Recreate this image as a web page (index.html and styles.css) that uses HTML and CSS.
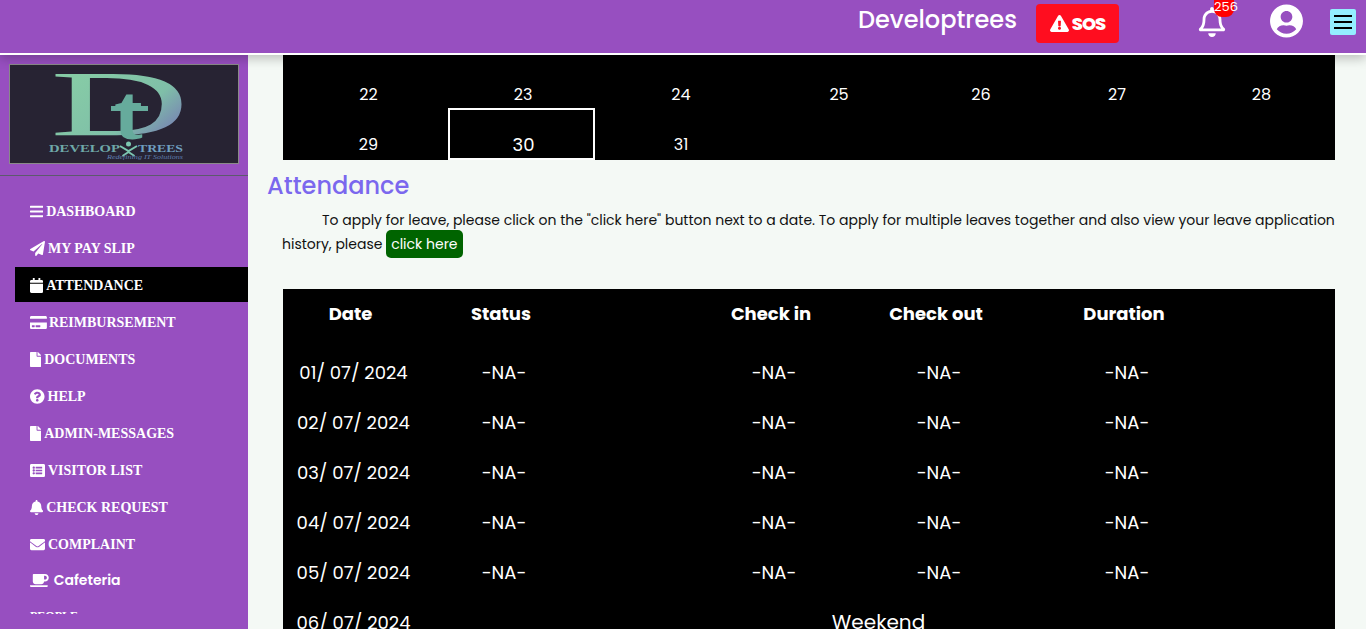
FILE: index.html
```html
<!DOCTYPE html>
<html lang="en">
<head>
<meta charset="utf-8">
<title>Attendance - Developtrees</title>
<link rel="stylesheet" href="styles.css">
</head>
<body>
<div class="page">
  <header class="topbar">
    <div class="brand">Developtrees</div>
    <button class="sos">
      <svg class="sos-icon" viewBox="0 0 576 512"><path d="M569.517 440.013C587.975 472.007 564.806 512 527.940 512H48.054c-36.937 0-59.999-40.055-41.577-71.987L246.423 23.985c18.467-32.009 64.720-31.951 83.154 0l239.940 416.028zM288 354c-25.405 0-46 20.595-46 46s20.595 46 46 46 46-20.595 46-46-20.595-46-46-46zm-43.673-165.346l7.418 136c.347 6.364 5.609 11.346 11.982 11.346h48.546c6.373 0 11.635-4.982 11.982-11.346l7.418-136c.375-6.874-5.098-12.654-11.982-12.654h-63.383c-6.884 0-12.356 5.780-11.981 12.654z"/></svg>
      <span>SOS</span>
    </button>
    <div class="bell">
      <svg class="bell-icon" viewBox="0 0 448 512"><path d="M439.390 362.290c-19.320-20.760-55.470-51.990-55.470-154.290 0-77.700-54.480-139.900-127.940-155.160V32c0-17.670-14.320-32-31.980-32s-31.980 14.330-31.980 32v20.840C118.560 68.100 64.080 130.300 64.080 208c0 102.300-36.150 133.530-55.470 154.290-6 6.450-8.660 14.160-8.610 21.710.110 16.400 12.980 32 32.100 32h383.800c19.120 0 32-15.600 32.100-32 .050-7.550-2.610-15.270-8.610-21.710zM67.530 368c21.220-27.970 44.420-74.330 44.530-159.420 0-.2-.06-.380-.06-.580 0-61.860 50.140-112 112-112s112 50.140 112 112c0 .2-.06.380-.06.580.11 85.100 23.310 131.460 44.530 159.420H67.530zM224 512c35.320 0 63.970-28.650 63.970-64H160.030c0 35.350 28.650 64 63.970 64z"/></svg>
      <span class="badge">256</span>
    </div>
    <svg class="user-icon" viewBox="0 0 496 512"><path d="M248 8C111 8 0 119 0 256s111 248 248 248 248-111 248-248S385 8 248 8zm0 96c48.600 0 88 39.400 88 88s-39.400 88-88 88-88-39.400-88-88 39.400-88 88-88zm0 344c-58.700 0-111.300-26.600-146.500-68.200 18.800-35.400 55.600-59.800 98.500-59.800 2.400 0 4.800.4 7.100 1.100 13 4.200 26.600 6.900 40.900 6.900 14.300 0 28-2.700 40.900-6.900 2.300-.7 4.700-1.100 7.100-1.100 42.900 0 79.700 24.400 98.500 59.800C359.300 421.400 306.700 448 248 448z"/></svg>
    <button class="burger"><i></i><i></i><i></i></button>
  </header>

  <aside class="sidebar">
    <div class="logo">
      <svg class="logo-art" viewBox="0 0 228 98" preserveAspectRatio="none">
        <defs>
          <linearGradient id="dt" x1="0.25" y1="0.2" x2="1" y2="0.85">
            <stop offset="0" stop-color="#86cba6"/>
            <stop offset="0.55" stop-color="#7fbfa8"/>
            <stop offset="1" stop-color="#7468b8"/>
          </linearGradient>
        </defs>
        <rect width="228" height="98" fill="#272333"/>
        <text class="logo-d" transform="translate(40 70) scale(2.05 1)" fill="url(#dt)">D</text>
        <text class="logo-t" transform="translate(104 74) scale(1.1 1)" fill="#66ab9c">t</text>
        <rect class="logo-bar" x="101" y="41" width="37" height="5"/>
        <text class="logo-name" x="39" y="87" textLength="71" lengthAdjust="spacingAndGlyphs" fill="#6fa8a8">DEVELOP</text>
        <circle cx="118.500" cy="79" r="2.500" fill="#7cc7b0"/>
        <path class="logo-figure" d="M110 81l8.500 5 8.500-5M118.500 86v1M118.500 87l-6 4M118.500 87l6 4"/>
        <text class="logo-name" x="128" y="87" textLength="45" lengthAdjust="spacingAndGlyphs" fill="#6f9fc0">TREES</text>
        <text class="logo-tag" x="97" y="94" textLength="76" lengthAdjust="spacingAndGlyphs" fill="#5f7fb0">Redefining IT Solutions</text>
      </svg>
    </div>
    <hr class="side-rule">
    <nav class="nav">
      <a class="nav-item"><svg viewBox="0 0 448 512"><path d="M16 132h416c8.837 0 16-7.163 16-16V76c0-8.837-7.163-16-16-16H16C7.163 60 0 67.163 0 76v40c0 8.837 7.163 16 16 16zm0 160h416c8.837 0 16-7.163 16-16v-40c0-8.837-7.163-16-16-16H16c-8.837 0-16 7.163-16 16v40c0 8.837 7.163 16 16 16zm0 160h416c8.837 0 16-7.163 16-16v-40c0-8.837-7.163-16-16-16H16c-8.837 0-16 7.163-16 16v40c0 8.837 7.163 16 16 16z"/></svg>DASHBOARD</a>
      <a class="nav-item"><svg viewBox="0 0 512 512"><path d="M476 3.2L12.5 270.600c-18.100 10.400-15.800 35.600 2.200 43.200L121 358.400l287.300-253.200c5.500-4.900 13.300 2.600 8.600 8.300L176 407v80.500c0 23.600 28.500 32.900 42.500 15.800L282 426l124.600 52.200c14.200 6 30.400-2.900 33-18.200l72-432C515 7.800 493.300-6.800 476 3.200z"/></svg>MY PAY SLIP</a>
      <a class="nav-item active"><svg viewBox="0 0 448 512"><path d="M12 192h424c6.600 0 12 5.400 12 12v260c0 26.500-21.500 48-48 48H48c-26.500 0-48-21.500-48-48V204c0-6.600 5.400-12 12-12zm436-44v-36c0-26.500-21.500-48-48-48h-48V12c0-6.600-5.400-12-12-12h-40c-6.600 0-12 5.400-12 12v52H160V12c0-6.600-5.400-12-12-12h-40c-6.600 0-12 5.400-12 12v52H48C21.500 64 0 85.500 0 112v36c0 6.600 5.400 12 12 12h424c6.600 0 12-5.400 12-12z"/></svg>ATTENDANCE</a>
      <a class="nav-item nav-tight"><svg viewBox="0 0 576 512"><path d="M0 432c0 26.500 21.500 48 48 48h480c26.500 0 48-21.500 48-48V256H0v176zm192-68c0-6.600 5.400-12 12-12h136c6.600 0 12 5.400 12 12v40c0 6.600-5.400 12-12 12H204c-6.600 0-12-5.400-12-12v-40zm-128 0c0-6.600 5.400-12 12-12h72c6.600 0 12 5.400 12 12v40c0 6.600-5.400 12-12 12H76c-6.600 0-12-5.400-12-12v-40zM576 80v48H0V80c0-26.500 21.500-48 48-48h480c26.500 0 48 21.500 48 48z"/></svg>REIMBURSEMENT</a>
      <a class="nav-item"><svg viewBox="0 0 384 512"><path d="M224 136V0H24C10.700 0 0 10.700 0 24v464c0 13.300 10.700 24 24 24h336c13.300 0 24-10.700 24-24V160H248c-13.200 0-24-10.800-24-24zm160-14.100V128H256V0h6.100c6.400 0 12.500 2.500 17 7l97.900 98c4.500 4.500 7 10.600 7 16.900z"/></svg>DOCUMENTS</a>
      <a class="nav-item"><svg viewBox="8 0 496 512"><path d="M504 256c0 136.997-111.043 248-248 248S8 392.997 8 256C8 119.083 119.043 8 256 8s248 111.083 248 248zM262.655 90c-54.497 0-89.255 22.957-116.549 63.758-3.536 5.286-2.353 12.415 2.715 16.258l34.699 26.310c5.205 3.947 12.621 3.008 16.665-2.122 17.864-22.658 30.113-35.797 57.303-35.797 20.429 0 45.698 13.148 45.698 32.958 0 14.976-12.363 22.667-32.534 33.976C247.128 238.528 216 254.941 216 296v4c0 6.627 5.373 12 12 12h56c6.627 0 12-5.373 12-12v-1.333c0-28.462 83.186-29.647 83.186-106.667 0-58.002-60.165-102-116.531-102zM256 338c-25.365 0-46 20.635-46 46 0 25.364 20.635 46 46 46s46-20.636 46-46c0-25.365-20.635-46-46-46z"/></svg>HELP</a>
      <a class="nav-item"><svg viewBox="0 0 384 512"><path d="M224 136V0H24C10.700 0 0 10.700 0 24v464c0 13.300 10.700 24 24 24h336c13.300 0 24-10.700 24-24V160H248c-13.200 0-24-10.800-24-24zm160-14.100V128H256V0h6.100c6.400 0 12.500 2.500 17 7l97.900 98c4.500 4.500 7 10.600 7 16.900z"/></svg>ADMIN-MESSAGES</a>
      <a class="nav-item"><svg viewBox="0 0 512 512"><path d="M464 480H48c-26.510 0-48-21.490-48-48V80c0-26.510 21.490-48 48-48h416c26.510 0 48 21.490 48 48v352c0 26.510-21.490 48-48 48zM128 120c-22.091 0-40 17.909-40 40s17.909 40 40 40 40-17.909 40-40-17.909-40-40-40zm0 96c-22.091 0-40 17.909-40 40s17.909 40 40 40 40-17.909 40-40-17.909-40-40-40zm0 96c-22.091 0-40 17.909-40 40s17.909 40 40 40 40-17.909 40-40-17.909-40-40-40zm288-136v-32c0-6.627-5.373-12-12-12H204c-6.627 0-12 5.373-12 12v32c0 6.627 5.373 12 12 12h200c6.627 0 12-5.373 12-12zm0 96v-32c0-6.627-5.373-12-12-12H204c-6.627 0-12 5.373-12 12v32c0 6.627 5.373 12 12 12h200c6.627 0 12-5.373 12-12zm0 96v-32c0-6.627-5.373-12-12-12H204c-6.627 0-12 5.373-12 12v32c0 6.627 5.373 12 12 12h200c6.627 0 12-5.373 12-12z"/></svg>VISITOR LIST</a>
      <a class="nav-item"><svg viewBox="0 0 448 512"><path d="M224 512c35.320 0 63.970-28.650 63.970-64H160.030c0 35.350 28.650 64 63.970 64zm215.390-149.710c-19.320-20.760-55.470-51.990-55.470-154.290 0-77.700-54.480-139.900-127.940-155.160V32c0-17.670-14.320-32-31.980-32s-31.980 14.330-31.980 32v20.840C118.560 68.100 64.080 130.300 64.080 208c0 102.300-36.150 133.530-55.470 154.290-6 6.450-8.660 14.160-8.610 21.710.110 16.400 12.980 32 32.100 32h383.800c19.120 0 32-15.600 32.100-32 .050-7.550-2.610-15.270-8.610-21.710z"/></svg>CHECK REQUEST</a>
      <a class="nav-item"><svg viewBox="0 0 512 512"><path d="M502.300 190.800c3.900-3.100 9.700-.2 9.700 4.700V400c0 26.500-21.500 48-48 48H48c-26.500 0-48-21.500-48-48V195.600c0-5 5.700-7.800 9.700-4.700 22.400 17.400 52.100 39.500 154.100 113.600 21.100 15.400 56.700 47.800 92.200 47.600 35.700.3 72-32.800 92.300-47.600 102-74.100 131.600-96.300 154-113.700zM256 320c23.200.4 56.600-29.200 73.400-41.400 132.700-96.300 142.800-104.700 173.400-128.700 5.800-4.500 9.200-11.500 9.200-18.900v-19c0-26.500-21.500-48-48-48H48C21.500 64 0 85.500 0 112v19c0 7.400 3.400 14.300 9.200 18.900 30.600 23.900 40.700 32.400 173.400 128.700 16.800 12.200 50.200 41.800 73.400 41.400z"/></svg>COMPLAINT</a>
      <a class="nav-item nav-sans"><svg viewBox="0 0 640 512"><path d="M192 384h192c53 0 96-43 96-96h32c70.600 0 128-57.400 128-128S582.600 32 512 32H120c-13.300 0-24 10.700-24 24v232c0 53 43 96 96 96zM512 96c35.300 0 64 28.700 64 64s-28.700 64-64 64h-32V96h32zm47.700 384H48.300c-47.600 0-61-64-36-64h583.300c25 0 11.800 64-35.900 64z"/></svg>Cafeteria</a>
      <a class="nav-item nav-people">PEOPLE</a>
    </nav>
  </aside>

  <main class="content">
    <div class="calendar">
      <span class="c1">22</span><span class="c2">23</span><span class="c3">24</span><span class="c4">25</span><span class="c5">26</span><span class="c6">27</span><span class="c7">28</span>
      <span class="c1">29</span><span class="c2 today">30</span><span class="c3">31</span>
    </div>
    <h1 class="title">Attendance</h1>
    <p class="intro">To apply for leave, please click on the "click here" button next to a date. To apply for multiple leaves together and also view your leave application history, please <a class="leave-link">click here</a></p>
    <table class="records">
      <colgroup><col class="col-date"><col class="col-status"><col class="col-gap"><col class="col-in"><col class="col-out"><col class="col-dur"><col class="col-end"></colgroup>
      <thead>
        <tr><th>Date</th><th>Status</th><th></th><th>Check in</th><th>Check out</th><th>Duration</th><th></th></tr>
      </thead>
      <tbody>
        <tr><td>01/ 07/ 2024</td><td>-NA-</td><td></td><td>-NA-</td><td>-NA-</td><td>-NA-</td><td></td></tr>
        <tr><td>02/ 07/ 2024</td><td>-NA-</td><td></td><td>-NA-</td><td>-NA-</td><td>-NA-</td><td></td></tr>
        <tr><td>03/ 07/ 2024</td><td>-NA-</td><td></td><td>-NA-</td><td>-NA-</td><td>-NA-</td><td></td></tr>
        <tr><td>04/ 07/ 2024</td><td>-NA-</td><td></td><td>-NA-</td><td>-NA-</td><td>-NA-</td><td></td></tr>
        <tr><td>05/ 07/ 2024</td><td>-NA-</td><td></td><td>-NA-</td><td>-NA-</td><td>-NA-</td><td></td></tr>
        <tr><td>06/ 07/ 2024</td><td class="weekend" colspan="6">Weekend</td></tr>
      </tbody>
    </table>
  </main>
</div>
</body>
</html>
```

FILE: styles.css
```css
* { box-sizing: border-box; }
html, body { margin: 0; height: 100%; overflow: hidden; }
body { font-family: Poppins, Inter, "Noto Sans", sans-serif; color: #111; }

.page {
  display: grid;
  grid-template-columns: 248px 1fr;
  grid-template-rows: 55px 1fr;
  height: 100vh;
  background: #f4f9f5;
}

/* top bar */
.topbar {
  grid-column: 1 / -1;
  position: relative;
  z-index: 2;
  display: flex;
  align-items: flex-start;
  justify-content: flex-end;
  background: #974fc0;
  border-bottom: 2px solid #fff;
  box-shadow: 0 4px 10px rgba(0, 0, 0, .22);
  color: #fff;
  padding-right: 10px;
}
.brand { font-size: 24px; font-weight: 500; line-height: 40px; margin-right: 19px; }
.sos {
  display: flex; align-items: center; justify-content: center; gap: 3px;
  width: 83px; height: 39px; margin-top: 4px; margin-right: 79px;
  background: #ff0d1f; color: #fff; border: 0; border-radius: 4px;
  font: 800 18px/1 Poppins, Inter, sans-serif;
  letter-spacing: -1px;
}
.sos-icon { width: 19px; height: 17px; fill: #fff; }
.bell { position: relative; margin-top: 7px; margin-right: 44px; width: 28px; height: 30px; }
.bell-icon { display: block; width: 28px; height: 30px; fill: #fff; }
.badge {
  position: absolute; left: 16px; top: -7px;
  width: 20px; height: 17px; border-radius: 0 0 8px 8px;
  background: #f00; color: #fff; font-size: 13px; line-height: 14px; text-align: center;
}
.user-icon { width: 33px; height: 34px; margin-top: 4px; margin-right: 27px; fill: #fff; }
.burger {
  display: flex; flex-direction: column; justify-content: center; gap: 4px;
  width: 26px; height: 26px; margin-top: 9px; padding: 0 4px;
  background: #94eeff; border: 0; border-radius: 2px;
}
.burger i { display: block; height: 2px; background: #000; }

/* sidebar */
.sidebar { background: #974fc0; min-height: 0; overflow: hidden; padding-top: 9px; }
.logo { margin: 0 9px; height: 100px; border: 1px solid #8a8a8a; }
.logo-art { display: block; width: 100%; height: 100%; }
.logo-d { font: 400 94px "Liberation Serif", serif; }
.logo-t { font: 700 78px "Liberation Serif", serif; }
.logo-bar { fill: #66ab9c; }
.logo-name { font: 700 10px "Liberation Serif", serif; }
.logo-tag { font: italic 400 6px "Liberation Serif", serif; }
.logo-figure { fill: none; stroke: #7cc7b0; stroke-width: 2; }
.side-rule { margin: 11px 0 0; height: 1px; border: 0; background: #5d5a6d; }
.nav { height: 438px; overflow: hidden; padding: 17px 0 0 15px; }
.nav-item {
  display: flex; align-items: center; gap: 3px;
  height: 35px; margin-bottom: 2px; padding: 2px 0 0 15px;
  font: 700 14px/33px "Liberation Serif", serif;
  color: #fff;
  white-space: nowrap;
}
.nav-item svg { height: 15px; width: auto; fill: #fff; flex: none; }
.nav-item.active { background: #000; }
.nav-tight { gap: 2px; }
.nav-sans { font: 600 14px/35px Poppins, Inter, sans-serif; gap: 5px; padding-top: 0; }
.nav-sans svg { height: 15px; }
.nav-people { font-size: 12px; margin-top: -1px; padding-top: 0; }

/* content */
.content { min-width: 0; min-height: 0; overflow: hidden; padding: 0 31px 0 35px; }
.calendar {
  display: grid;
  grid-template-columns: 165px 147px 172px 143px 142px 130px 153px;
  grid-auto-rows: 50px;
  padding-top: 3px; height: 105px;
  background: #000; color: #fff;
  font-size: 16px; line-height: 28px; text-align: center;
}
.calendar span { padding-top: 23px; }
.calendar .c1 { padding-left: 6px; }
.calendar .c2 { padding-left: 3px; }
.calendar .c4 { padding-left: 1px; }
.calendar .c7 { padding-left: 6px; }
.calendar .today {
  height: 52px; padding-top: 21px; padding-left: 4px;
  border: 2px solid #fff;
  font-size: 18px;
}
.title { margin: 8px 0 4px -16px; font-size: 24px; line-height: 36px; font-weight: 500; color: #7b68ee; }
.intro { margin: 0 -1px 33px -1px; font-size: 14px; line-height: 24px; text-indent: 40px; }
.leave-link {
  padding: 4px 5px; background: #006400; color: #fff; border-radius: 5px;
  font-size: 14px;
}
.records {
  width: 100%; border-collapse: collapse; table-layout: fixed;
  background: #000; color: #fff;
}
.col-date { width: 141px; }
.col-status { width: 160px; }
.col-gap { width: 97px; }
.col-in { width: 186px; }
.col-out { width: 144px; }
.col-dur { width: 232px; }
.col-end { width: 92px; }
.records th {
  height: 48px; padding: 0 6px 0 0; font-size: 18px; font-weight: 700; text-align: center;
}
.records td { height: 50px; padding: 0; font-size: 18px; text-align: center; white-space: nowrap; }
.records tbody tr:first-child td { padding-top: 10px; height: 60px; }
.records .weekend { font-size: 20px; padding-right: 2px; }
```
